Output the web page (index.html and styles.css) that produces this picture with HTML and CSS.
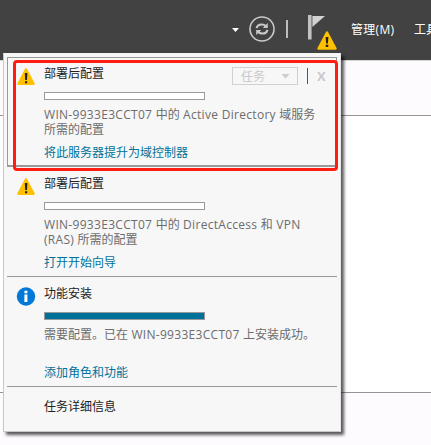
FILE: index.html
```html
<!DOCTYPE html>
<html lang="zh-CN">
<head>
<meta charset="utf-8">
<title>服务器管理器</title>
<link rel="stylesheet" href="styles.css">
</head>
<body>
<header class="toolbar">
  <span class="caret"></span>
  <svg class="refresh" width="26" height="26" viewBox="0 0 26 26" fill="none" stroke="#c9c9c9">
    <circle cx="13" cy="13" r="12" stroke-width="1.6"/>
    <path d="M7.7 12.2c.3-2.5 2.5-3.7 5.1-3.7 1.8 0 3 .6 4 1.8M18.3 13.8c-.3 2.5-2.5 3.7-5.1 3.7-1.8 0-3-.6-4-1.8" stroke-width="2.2"/>
    <path d="M18.8 7v5h-5zM7.2 19v-5h5z" fill="#c9c9c9" stroke="none"/>
  </svg>
  <span class="sep"></span>
  <span class="flag">
    <svg width="17" height="25" viewBox="0 0 17 25"><path d="M0 0h3.6v24.5H0z" fill="#c2c2c2"/><path d="M4.4 1H17L4.4 12z" fill="#d2d2d2"/></svg>
    <svg class="flag-warn" width="20" height="19" viewBox="0 0 20 19"><path d="M10 1.5 18.5 17.5H1.5Z" fill="#ffc000" stroke="#ffc000" stroke-width="2.4" stroke-linejoin="round"/><path d="M8.6 6h2.8l-.5 6.5H9.1zM8.7 13.8h2.6V16H8.7z" fill="#222"/></svg>
  </span>
  <span class="menu manage">管理(M)</span>
  <span class="menu tools">工具</span>
</header>
<main class="content"><div class="band"></div></main>

<aside class="panel">
  <section class="item selected">
    <svg class="icon" width="20" height="19" viewBox="0 0 20 19"><path d="M10 2.2 17.7 16.8H2.3Z" fill="#ffc000" stroke="#ffc000" stroke-width="2.2" stroke-linejoin="round"/><path d="M8.8 6h2.6l-.4 7H9.2zM9 14.2h2.2v2H9z" fill="#222"/></svg>
    <div class="body">
      <div class="heading">
        <h2>部署后配置</h2>
        <div class="actions"><span class="task">任务<i></i></span><span class="rule"></span><span class="close">X</span></div>
      </div>
      <div class="progress"></div>
      <p><span class="latin">WIN-9933E3CCT07 </span>中的<span class="latin"> Active Directory </span>域服务<br>所需的配置</p>
      <a>将此服务器提升为域控制器</a>
    </div>
  </section>
  <section class="item">
    <svg class="icon" width="20" height="19" viewBox="0 0 20 19"><path d="M10 2.2 17.7 16.8H2.3Z" fill="#ffc000" stroke="#ffc000" stroke-width="2.2" stroke-linejoin="round"/><path d="M8.8 6h2.6l-.4 7H9.2zM9 14.2h2.2v2H9z" fill="#222"/></svg>
    <div class="body">
      <div class="heading"><h2>部署后配置</h2></div>
      <div class="progress"></div>
      <p><span class="latin">WIN-9933E3CCT07 </span>中的<span class="latin"> DirectAccess </span>和<span class="latin"> VPN</span><br><span class="latin">(RAS) </span>所需的配置</p>
      <a>打开开始向导</a>
    </div>
  </section>
  <section class="item">
    <svg class="icon" width="20" height="19" viewBox="0 0 20 19"><circle cx="10" cy="9.5" r="9.2" fill="#0078d7"/><path d="M8.4 3.8h3v2.5h-3zM8.4 7.6h3V15h-3z" fill="#fff"/></svg>
    <div class="body">
      <div class="heading"><h2>功能安装</h2></div>
      <div class="progress done"></div>
      <p>需要配置。已在<span class="latin"> WIN-9933E3CCT07 </span>上安装成功。</p>
      <a>添加角色和功能</a>
    </div>
  </section>
  <footer>任务详细信息</footer>
</aside>
<div class="highlight"></div>
</body>
</html>
```
FILE: styles.css
```css
* { box-sizing: border-box; }
body {
  margin: 0;
  width: 431px;
  height: 445px;
  overflow: hidden;
  background: #fefbfe;
  font: 12px/15px "Open Sans", "Noto Sans CJK SC", sans-serif;
  color: #222;
}
.toolbar {
  display: flex;
  height: 60px;
  padding-left: 232px;
  background: #424242;
  color: #fff;
  white-space: nowrap;
  overflow: hidden;
}
.toolbar > * { flex: none; }
.caret {
  margin-top: 28px;
  width: 7px;
  height: 4px;
  background: #fff;
  clip-path: polygon(0 0, 100% 0, 50% 100%);
}
.refresh { margin: 16px 0 0 10px; }
.sep { margin: 20px 0 0 11px; width: 2px; height: 18px; background: #bdbdbd; }
.flag { position: relative; margin: 15px 0 0 20px; width: 43px; }
.flag svg { display: block; }
.flag .flag-warn { position: absolute; left: 9px; top: 16px; }
.menu { margin-top: 22px; line-height: 16px; }
.manage { width: 63px; letter-spacing: .3px; }
.content { height: 385px; padding-top: 54px; border-top: 1px solid #d5d3d5; }
.band {
  height: 278px;
  background: #fff;
  border-top: 1px solid #969296;
  border-bottom: 1px solid #969296;
}
.panel {
  position: absolute;
  left: 3px;
  top: 53px;
  width: 338px;
  height: 379px;
  padding: 4px 3px 0;
  background: #f7f7f7;
  border: 1px solid #c8c8c8;
  border-top-color: #f4f4f4;
  border-right-color: #e4e4e4;
  box-shadow: 3px 3px 3px rgba(0, 0, 0, .65);
}
.item {
  display: flex;
  height: 110px;
  padding: 10px 0 0 9px;
  border-bottom: 1px solid #999;
}
.item.selected {
  margin-top: -1px;
  padding: 9px 0 0 8px;
  border: 1px solid #999;
  border-bottom-width: 2px;
}
.icon { flex: none; margin: 0 8px 0 0; }
.body { flex: 1; }
.heading { display: flex; justify-content: space-between; height: 25px; }
h2 { margin: -1px 0 0; font: inherit; line-height: 15px; }
.actions { display: flex; color: #c9c9c9; padding-right: 10px; }
.task {
  display: flex;
  justify-content: space-between;
  align-items: center;
  width: 66px;
  height: 18px;
  padding: 0 7px 0 8px;
  border: 1px solid #d0d0d0;
}
.task i { width: 9px; height: 5px; background: #ccc; clip-path: polygon(0 0, 100% 0, 50% 100%); }
.rule { width: 1px; height: 16px; margin: 1px 9px 0; background: #555; }
.close { font-weight: 700; line-height: 18px; width: 9px; font-size: 13px; }
.progress { width: 161px; height: 8px; background: #fff; border: 1px solid #999; }
.progress.done { background: #007299; }
p { margin: 7px 0 8px; height: 30px; color: #6c6c6c; white-space: nowrap; }
.latin { letter-spacing: .3px; }
a { display: block; color: #007299; line-height: 15px; }
footer { padding: 12px 0 0 37px; }
.highlight {
  position: absolute;
  left: 13px;
  top: 60px;
  width: 325px;
  height: 111px;
  border: 3px solid #ff1d12;
  border-radius: 4px;
}
```
